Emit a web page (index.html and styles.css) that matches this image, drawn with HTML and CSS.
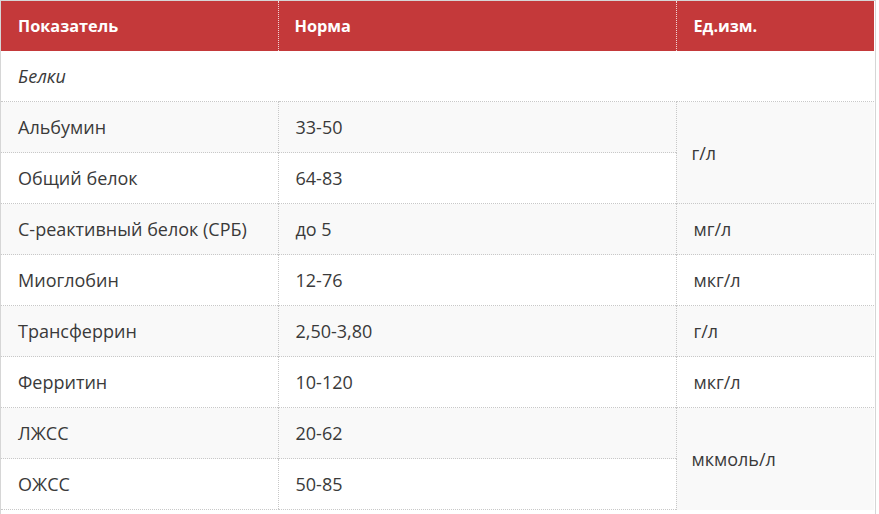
FILE: index.html
```html
<!DOCTYPE html>
<html lang="ru">
<head>
<meta charset="utf-8">
<title>Таблица</title>
<link rel="stylesheet" href="styles.css">
</head>
<body>
<div class="wrap">
<table class="norms">
<colgroup><col class="c1"><col class="c2"><col class="c3"></colgroup>
<thead>
<tr><th>Показатель</th><th>Норма</th><th>Ед.изм.</th></tr>
</thead>
<tbody>
<tr class="group"><td colspan="3"><em>Белки</em></td></tr>
<tr class="alt"><td>Альбумин</td><td>33-50</td><td rowspan="2" class="unit">г/л</td></tr>
<tr><td>Общий белок</td><td>64-83</td></tr>
<tr class="alt"><td>С-реактивный белок (СРБ)</td><td>до 5</td><td>мг/л</td></tr>
<tr><td>Миоглобин</td><td>12-76</td><td>мкг/л</td></tr>
<tr class="alt"><td>Трансферрин</td><td>2,50-3,80</td><td>г/л</td></tr>
<tr><td>Ферритин</td><td>10-120</td><td>мкг/л</td></tr>
<tr class="alt"><td>ЛЖСС</td><td>20-62</td><td rowspan="2" class="unit">мкмоль/л</td></tr>
<tr><td>ОЖСС</td><td>50-85</td></tr>
</tbody>
</table>
</div>
</body>
</html>
```
FILE: styles.css
```css
html, body {
  margin: 0;
  padding: 0;
  background: #fff;
}
.wrap {
  width: 874px;
  border-top: 1px solid #d6d6d6;
  border-left: 1px solid #d6d6d6;
  border-right: 1px solid #d6d6d6;
  background: #fff;
  height: 514px;
}
.norms {
  width: 873px;
  border-collapse: collapse;
  font-family: "Open Sans", "Noto Sans", sans-serif;
  font-size: 18px;
  color: #3a3a3a;
  table-layout: fixed;
}
.c1 { width: 277px; }
.c2 { width: 398px; }
.c3 { width: 198px; }
.norms th {
  background: #c4393a;
  color: #fff;
  font-size: 16.3px;
  font-weight: 700;
  text-align: left;
  height: 50px;
  padding: 0 0 0 17px;
  border-left: 1px dotted #f0d6d6;
}
.norms th:first-child { border-left: none; }
.norms th:nth-child(2) { padding-left: 16px; }
.norms td {
  height: 50px;
  padding: 0 0 0 17px;
  border-top: 1px dotted #c8c8c8;
  border-left: 1px dotted #c8c8c8;
  vertical-align: middle;
}
.norms td:first-child { border-left: none; }
.norms td.unit { border-left: 1px dotted #c8c8c8; padding-left: 15px; }
.norms tbody tr:last-child td { border-bottom: 1px dotted #c8c8c8; }
.norms .group td { border-top: none; height: 50px; }
.norms .group em { font-style: italic; }
.norms tr.alt td { background: #f9f9f9; }
```
